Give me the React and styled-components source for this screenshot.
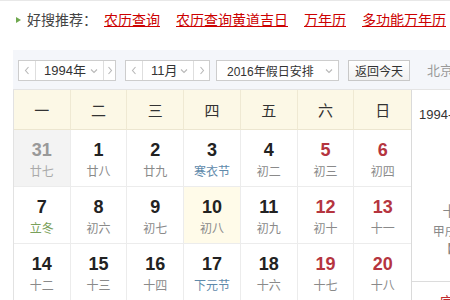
import React from 'react';
import styled, { createGlobalStyle } from 'styled-components';

const Global = createGlobalStyle`
  * { box-sizing: border-box; }
  html, body { margin: 0; padding: 0; background: #fff; overflow: hidden; }
  body { font-family: "Liberation Sans", "Noto Sans CJK SC", sans-serif; color: #333; }
`;

const Page = styled.div`
  width: 620px;
`;

const Recommend = styled.div`
  height: 50px;
  border-top: 1px solid #e8e8e8;
  padding: 9px 0 0 16px;
  display: flex;
  align-items: flex-start;
  font-size: 14px;
  line-height: 20px;
  white-space: nowrap;
`;

const Arrow = styled.span`
  width: 0;
  height: 0;
  margin-top: 7px;
  margin-right: 6px;
  border-left: 5px solid #6fa84f;
  border-top: 3.5px solid transparent;
  border-bottom: 3.5px solid transparent;
`;

const Label = styled.span`
  color: #444;
  margin-right: 7px;
`;

const Link = styled.a`
  color: #c00;
  text-decoration: underline;
  margin-right: 16px;
  cursor: pointer;
`;

const Calendar = styled.div`
  margin-left: 13px;
  width: 560px;
`;

const Toolbar = styled.div`
  height: 40px;
  background: #f4f6fa;
  border-bottom: 1px solid #e4e4e4;
  display: flex;
  align-items: flex-start;
  padding: 10px 0 0 5px;
  font-size: 13px;
  white-space: nowrap;
`;

const Stepper = styled.div`
  display: flex;
  flex-shrink: 0;
  height: 21px;
  border: 1px solid #cdcdcd;
  background: #fff;
  margin-right: ${p => p.$gap}px;
`;

const StepBtn = styled.span`
  width: ${p => p.$w}px;
  display: flex;
  align-items: center;
  justify-content: center;
  ${p => (p.$side === 'prev' ? 'border-right' : 'border-left')}: 1px solid #dedede;
`;

const StepValue = styled.span`
  width: ${p => p.$w}px;
  display: flex;
  align-items: center;
  justify-content: space-between;
  padding: 0 5px 0 8px;
  line-height: 19px;
  color: #333;
`;

const Select = styled.div`
  width: 123px;
  flex-shrink: 0;
  height: 21px;
  border: 1px solid #cdcdcd;
  background: #fff;
  display: flex;
  align-items: center;
  justify-content: space-between;
  padding: 0 5px 0 10px;
  margin-right: 9px;
  font-size: 12px;
  color: #333;
`;

const Button = styled.div`
  width: 62px;
  flex-shrink: 0;
  height: 21px;
  border: 1px solid #c8c8c8;
  background: linear-gradient(#ffffff, #f1f1f1);
  display: flex;
  align-items: center;
  justify-content: center;
  font-size: 12px;
  color: #333;
`;

const City = styled.span`
  margin-left: 17px;
  line-height: 21px;
  color: #999;
`;

const Icon = styled.svg`
  flex-shrink: 0;
  display: block;
`;

const Main = styled.div`
  display: flex;
`;

const Grid = styled.div`
  width: 398px;
  border-left: 1px solid #e2e2e2;
  display: grid;
  grid-template-columns: repeat(7, 1fr);
`;

const HeadCell = styled.div`
  height: 40px;
  background: #fcf8e6;
  border-bottom: 1px solid #ece6d0;
  border-right: ${p => (p.$last ? 'none' : '1px solid #efe9d3')};
  display: flex;
  align-items: center;
  justify-content: center;
  font-family: "Noto Sans CJK SC", sans-serif;
  font-size: 15px;
  color: #333;
`;

const DayCell = styled.div`
  height: 57px;
  border-bottom: 1px solid #ececec;
  border-right: ${p => (p.$last ? 'none' : '1px solid #ececec')};
  background: ${p => (p.$prev ? '#f3f3f3' : p.$today ? '#fffbe9' : '#fff')};
  padding-top: 10px;
  display: flex;
  flex-direction: column;
  align-items: center;
`;

const DayNum = styled.div`
  font-family: "Liberation Sans", sans-serif;
  font-weight: bold;
  font-size: 18px;
  line-height: 20px;
  color: ${p => (p.$prev ? '#999' : p.$weekend ? '#b5353f' : '#222')};
`;

const Lunar = styled.div`
  margin-top: 1px;
  font-family: "Noto Sans CJK SC", sans-serif;
  font-size: 12px;
  line-height: 20px;
  color: ${p =>
    p.$kind === 'holiday' ? '#5f8aab' : p.$kind === 'term' ? '#79a05a' : p.$prev ? '#aaa' : '#8a8a8a'};
`;

const Panel = styled.div`
  width: 118px;
  border-left: 1px solid #dadada;
  text-align: center;
  font-family: "Liberation Sans", "Noto Sans CJK SC", sans-serif;
`;

const DateLine = styled.div`
  margin-top: 17px;
  padding-left: 7px;
  text-align: left;
  font-size: 13px;
  line-height: 16px;
  color: #333;
  white-space: nowrap;
`;

const LunarDate = styled.div`
  margin-top: 78px;
  font-size: 14px;
  line-height: 20px;
  color: #888;
`;

const GanZhi = styled.div`
  margin-top: ${p => p.$top || 0}px;
  font-size: 12px;
  line-height: 18px;
  color: #888;
  white-space: nowrap;
`;

const Divider = styled.div`
  margin-top: 22px;
  border-top: 1px solid #dcdcdc;
`;

const Yi = styled.div`
  padding: 10px 0 0 28px;
  text-align: left;
  font-size: 14px;
  line-height: 20px;
  color: #c0282d;
`;

const Chevron = ({ dir }) => {
  const d = {
    left: 'M4.5 1 L1.5 4.5 L4.5 8',
    right: 'M1.5 1 L4.5 4.5 L1.5 8',
    down: 'M1 1.5 L4 4.5 L7 1.5',
  }[dir];
  const w = dir === 'down' ? 8 : 6;
  const h = dir === 'down' ? 6 : 9;
  return (
    <Icon width={w} height={h} viewBox={`0 0 ${w} ${h}`}>
      <path d={d} fill="none" stroke="#b8b8b8" strokeWidth="1.1" />
    </Icon>
  );
};

const weekdays = ['一', '二', '三', '四', '五', '六', '日'];

const days = [
  [31, '廿七', { prev: true }], [1, '廿八'], [2, '廿九'], [3, '寒衣节', { kind: 'holiday' }], [4, '初二'], [5, '初三'], [6, '初四'],
  [7, '立冬', { kind: 'term' }], [8, '初六'], [9, '初七'], [10, '初八', { today: true }], [11, '初九'], [12, '初十'], [13, '十一'],
  [14, '十二'], [15, '十三'], [16, '十四'], [17, '下元节', { kind: 'holiday' }], [18, '十六'], [19, '十七'], [20, '十八'],
  [21, '十九'], [22, '小雪', { kind: 'term' }], [23, '廿一'], [24, '廿二'], [25, '廿三'], [26, '廿四'], [27, '廿五'],
];

const links = ['农历查询', '农历查询黄道吉日', '万年历', '多功能万年历'];

export default function App() {
  return (
    <Page>
      <Global />
      <Recommend>
        <Arrow />
        <Label>好搜推荐：</Label>
        {links.map(l => (
          <Link key={l}>{l}</Link>
        ))}
      </Recommend>
      <Calendar>
        <Toolbar>
          <Stepper $gap={9}>
            <StepBtn $w={17} $side="prev"><Chevron dir="left" /></StepBtn>
            <StepValue $w={67}>1994年<Chevron dir="down" /></StepValue>
            <StepBtn $w={12} $side="next"><Chevron dir="right" /></StepBtn>
          </Stepper>
          <Stepper $gap={6}>
            <StepBtn $w={17} $side="prev"><Chevron dir="left" /></StepBtn>
            <StepValue $w={50}>11月<Chevron dir="down" /></StepValue>
            <StepBtn $w={16} $side="next"><Chevron dir="right" /></StepBtn>
          </Stepper>
          <Select>2016年假日安排<Chevron dir="down" /></Select>
          <Button>返回今天</Button>
          <City>北京</City>
        </Toolbar>
        <Main>
          <Grid>
            {weekdays.map((w, i) => (
              <HeadCell key={w} $last={i === 6}>{w}</HeadCell>
            ))}
            {days.map(([n, lunar, opt = {}], i) => {
              const col = i % 7;
              const weekend = col >= 5;
              return (
                <DayCell key={i} $last={col === 6} $prev={opt.prev} $today={opt.today}>
                  <DayNum $prev={opt.prev} $weekend={weekend}>{n}</DayNum>
                  <Lunar $kind={opt.kind} $prev={opt.prev}>{lunar}</Lunar>
                </DayCell>
              );
            })}
          </Grid>
          <Panel>
            <DateLine>1994-11-10 星期四</DateLine>
            <LunarDate>十月初八</LunarDate>
            <GanZhi $top={2}>甲戌年 乙亥月</GanZhi>
            <GanZhi>【庚子日】</GanZhi>
            <Divider />
            <Yi>宜</Yi>
          </Panel>
        </Main>
      </Calendar>
    </Page>
  );
}
